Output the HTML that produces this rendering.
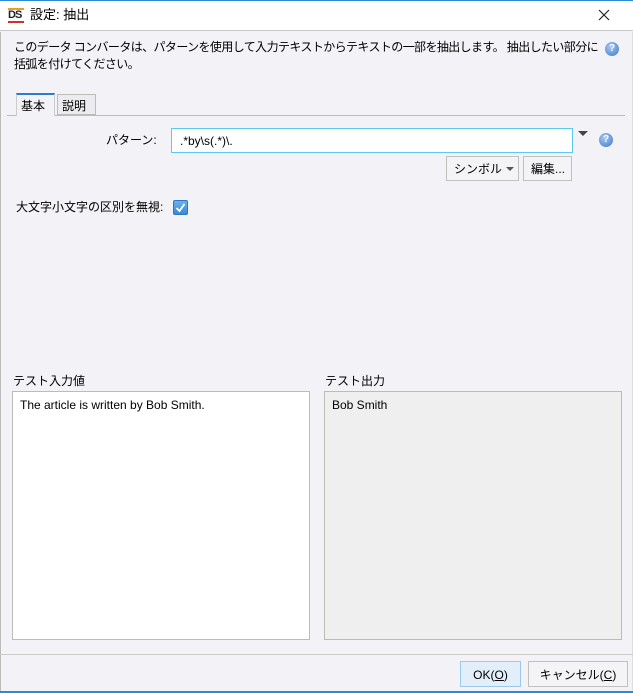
<!DOCTYPE html>
<html><head><meta charset="utf-8"><style>
*{box-sizing:border-box;margin:0;padding:0}
body{width:633px;height:693px;overflow:hidden;background:#f2f2f7;font-family:"Liberation Sans","Noto Sans CJK JP",sans-serif;font-size:12px;line-height:14px;color:#000;position:relative}
.a{position:absolute;white-space:nowrap}
</style></head><body>
<div class="a" style="left:0;top:0;width:633px;height:1px;background:#2b8ad6"></div>
<div class="a" style="left:0;top:1px;width:633px;height:30px;background:#fff;border-bottom:1px solid #c8c8c8"></div>
<div class="a" style="left:8px;top:8px;width:16px;height:15px">
 <div class="a" style="left:0;top:0;width:16px;height:2px;background:#e8a020"></div>
 <div class="a" style="left:0;top:2px;font:bold 11px/11px 'Liberation Sans',sans-serif;letter-spacing:-1px;color:#222">DS</div>
 <div class="a" style="left:0;top:13px;width:16px;height:2px;background:#d03030"></div>
</div>
<div class="a" style="left:30px;top:8px;font-size:13px">設定: 抽出</div>
<svg class="a" style="left:598px;top:9px" width="12" height="12"><path d="M1 1L11 11M11 1L1 11" stroke="#222" stroke-width="1.2"/></svg>
<div class="a" style="left:0;top:32px;width:1px;height:660px;background:#bbb"></div>
<div class="a" style="left:632px;top:32px;width:1px;height:660px;background:#ddd"></div>
<div class="a" style="left:14px;top:39px;line-height:17px;letter-spacing:-0.6px">このデータ コンバータは、パターンを使用して入力テキストからテキストの一部を抽出します。 抽出したい部分に<br>括弧を付けてください。</div>
<div class="a" style="left:605px;top:42px;width:14px;height:14px;border-radius:50%;background:radial-gradient(circle at 40% 35%,#a8c8f0,#3a78c8);color:#fff;font-size:10px;font-weight:bold;text-align:center;line-height:14px">?</div>
<div class="a" style="left:7px;top:115px;width:618px;height:1px;background:#bbb"></div>
<div class="a" style="left:16px;top:93px;width:39px;height:23px;background:#f2f2f7;border:1px solid #ccc;border-top:2px solid #2b7bd0;border-bottom:none;padding:4px 0 0 4px">基本</div>
<div class="a" style="left:57px;top:94px;width:39px;height:21px;background:#ececf0;border:1px solid #bbb;padding:4px 0 0 4px">説明</div>
<div class="a" style="left:106px;top:133px">パターン:</div>
<div class="a" style="left:171px;top:128px;width:402px;height:25px;background:#fff;border:1px solid #5fc8f0;padding:5px 0 0 8px">.*by\s(.*)\.</div>
<div class="a" style="left:578px;top:131px;width:0;height:0;border-left:5px solid transparent;border-right:5px solid transparent;border-top:5px solid #444"></div>
<div class="a" style="left:599px;top:133px;width:14px;height:14px;border-radius:50%;background:radial-gradient(circle at 40% 35%,#a8c8f0,#3a78c8);color:#fff;font-size:10px;font-weight:bold;text-align:center;line-height:14px">?</div>
<div class="a" style="left:446px;top:156px;width:73px;height:25px;border:1px solid #c0c0c0;background:#f4f4f6;padding:5px 0 0 7px">シンボル</div>
<div class="a" style="left:506px;top:167px;width:0;height:0;border-left:4px solid transparent;border-right:4px solid transparent;border-top:4px solid #555"></div>
<div class="a" style="left:523px;top:156px;width:49px;height:25px;border:1px solid #c0c0c0;background:#f4f4f6;padding:5px 0 0 7px">編集...</div>
<div class="a" style="left:16px;top:200px">大文字小文字の区別を無視:</div>
<div class="a" style="left:173px;top:200px;width:15px;height:15px;border-radius:2px;background:linear-gradient(#6ab0ea,#3a8ad8);border:1px solid #2f76c0"></div>
<svg class="a" style="left:175px;top:202px" width="11" height="11"><path d="M1.5 6L4.5 9L9.5 2" stroke="#fff" stroke-width="1.8" fill="none"/></svg>
<div class="a" style="left:13px;top:374px">テスト入力値</div>
<div class="a" style="left:325px;top:374px">テスト出力</div>
<div class="a" style="left:12px;top:391px;width:298px;height:249px;background:#fff;border:1px solid #bbb;padding:6px 0 0 7px">The article is written by Bob Smith.</div>
<div class="a" style="left:324px;top:391px;width:298px;height:249px;background:#efefef;border:1px solid #bbb;padding:6px 0 0 7px">Bob Smith</div>
<div class="a" style="left:0;top:654px;width:633px;height:1px;background:#ccc"></div>
<div class="a" style="left:460px;top:661px;width:61px;height:26px;border:1px solid #9cc8ea;background:#e2effa;text-align:center;padding-top:6px">OK(<u>O</u>)</div>
<div class="a" style="left:528px;top:661px;width:100px;height:26px;border:1px solid #c0c0c0;background:#f4f4f6;text-align:center;padding-top:6px">キャンセル(<u>C</u>)</div>
<div class="a" style="left:0;top:691px;width:633px;height:2px;background:#2b8ad6"></div>
</body></html>
